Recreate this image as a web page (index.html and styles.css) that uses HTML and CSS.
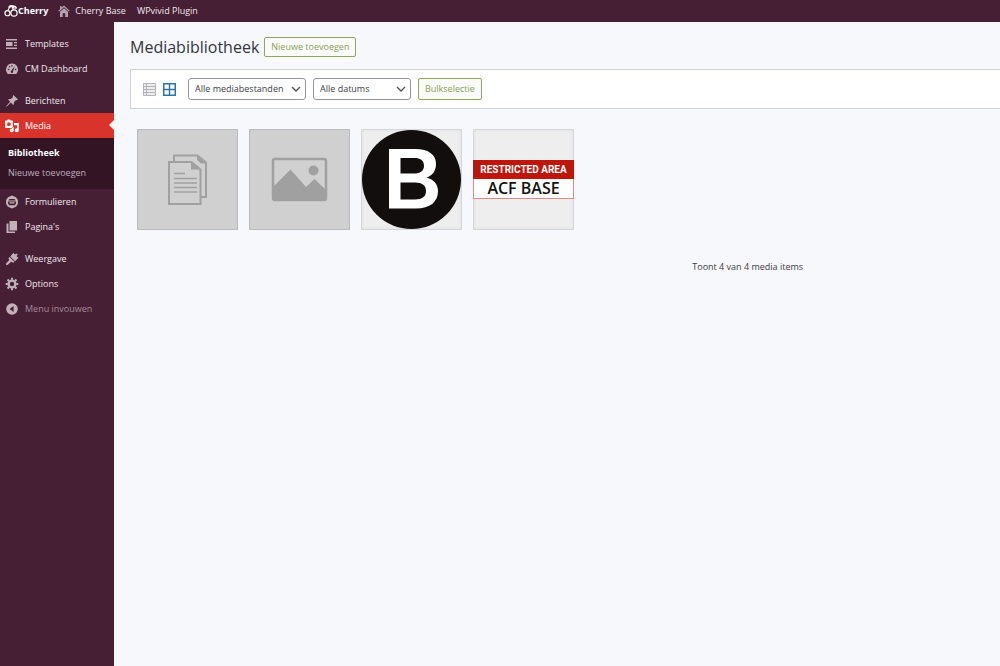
FILE: index.html
```html
<!DOCTYPE html>
<html lang="nl">
<head>
<meta charset="utf-8">
<meta name="viewport" content="width=device-width, initial-scale=1">
<title>Mediabibliotheek</title>
<link rel="stylesheet" href="styles.css">
</head>
<body>
<header class="adminbar">
  <a class="brand" href="#">
    <svg class="brand-mark" viewBox="0 0 15 14" fill="none" stroke="currentColor" stroke-width="1.300" aria-hidden="true"><circle cx="3.700" cy="9.400" r="2.700"/><circle cx="10.700" cy="9.200" r="3.400"/><path d="M4.200 6.700C4.700 4.400 6.500 2.400 9 1.600M10.200 5.800C9 4.600 8.600 3.200 9 1.600M4.800 3.200C6 1.300 7.500 1 9 1.600c2-.3 3.700.4 4.300 2.200-1.800.6-3.500 0-4.300-2.200"/></svg>
    <span>Cherry</span>
  </a>
  <a class="bar-link" href="#">
    <svg class="home" viewBox="0 0 12 12" fill="currentColor" aria-hidden="true"><path d="M6 .5 11.700 5.800 10.900 6.600 6 2.200 1.100 6.600.3 5.800 2 4.200V1.200h1.800v1.300zM6 3.200l4 3.600V12H7.300V8.200H4.700V12H2V6.800z"/></svg>
    <span>Cherry Base</span>
  </a>
  <a class="bar-link" href="#">WPvivid Plugin</a>
</header>
<div class="shell">
  <nav class="sidebar">
    <a class="item" href="#"><svg viewBox="0 0 14 14" aria-hidden="true"><path fill="currentColor" d="M1 2h11v1.400H1zM1 5h6.500v4H1zM9 5h3v1.300H9zM9 7.700h3V9H9zM1 10.600h11V12H1z"/></svg>Templates</a>
    <a class="item" href="#"><svg viewBox="0 0 14 14" aria-hidden="true"><path fill="currentColor" d="M7 1.500a6 6 0 0 0-5.200 9c.4.800.8 1.500 1.400 1.500h7.600c.6 0 1-.7 1.400-1.500A6 6 0 0 0 7 1.500z"/><g fill="#461f34"><circle cx="3.500" cy="7.500" r=".8"/><circle cx="4.600" cy="4.800" r=".8"/><circle cx="7" cy="3.700" r=".8"/><circle cx="10.600" cy="7.500" r=".8"/><path d="M9.800 4 8 9.500a1.200 1.200 0 1 1-1.700-.7z"/></g></svg>CM Dashboard</a>
    <a class="item group" href="#"><svg viewBox="0 0 14 14" aria-hidden="true"><path fill="currentColor" d="m8.400 1 4.600 4.500-.9.700-1-.2-2.200 2.200c.2 1.100.1 2-.7 2.700L5.900 8.600 1.500 12.700l-.4-.4 4-4.500L3 5.600c.8-.7 1.700-.8 2.800-.6L8 2.900l-.2-1z"/></svg>Berichten</a>
    <a class="item current" href="#"><svg viewBox="0 0 14 14" aria-hidden="true"><path fill="currentColor" fill-rule="evenodd" d="M.5 1.500h1.600l.7-1h2l.7 1h1.700q.6 0 .6.600v6.200q0 .6-.6.600H.5q-.5 0-.5-.6V2.100q0-.6.500-.6zM3.900 3.300a1.900 1.900 0 1 0 0 3.800 1.900 1.900 0 0 0 0-3.800zM9 4h4.800v7.300a2 2 0 1 1-1.800-2V6.300H9zM5.500 9.700H7V8.200h1.700v3.500a2 2 0 1 1-3.200-2z"/></svg>Media</a>
    <div class="submenu">
      <a class="sub active" href="#">Bibliotheek</a>
      <a class="sub" href="#">Nieuwe toevoegen</a>
    </div>
    <a class="item" href="#"><svg viewBox="0 0 14 14" aria-hidden="true"><path fill="currentColor" fill-rule="evenodd" d="M7 .6 11 2.200 12.900 5v4L11 11.800 7 13.400 3 11.800 1.100 9V5L3 2.200zM4.500 4 3.400 5.500h7.200L9.500 4zM3 6.600v2l1.200 1.700h5.600L11 8.600v-2zM4.500 7.300h5v1.200h-5z"/></svg>Formulieren</a>
    <a class="item" href="#"><svg viewBox="0 0 14 14" aria-hidden="true"><path fill="currentColor" d="M4.500 1H12v9.500H4.500zM1.500 3.500h2v8H10V13H1.500z"/></svg>Pagina's</a>
    <a class="item group" href="#"><svg viewBox="0 0 14 14" aria-hidden="true"><path fill="currentColor" d="m8.500.8 1.300 1.600 2-1 .9.900-1.200 1.900 1.900 1.500-3.200 3.500-5-4.800zM4.600 5 9.500 9.700 8.300 10.800 6.200 9.700l-3.700 3.200q-1.700.5-1.600-1.200L4.300 8l-.9-1.800z"/></svg>Weergave</a>
    <a class="item" href="#"><svg viewBox="0 0 14 14" aria-hidden="true"><g stroke="currentColor" fill="none"><circle cx="7" cy="7" r="3.400" stroke-width="2.400"/><path stroke-width="2" d="M7 .7v2M7 11.300v2M.7 7h2M11.300 7h2M2.500 2.500 4 4M10 10l1.500 1.500M2.500 11.500 4 10M10 4l1.500-1.500"/></g></svg>Options</a>
    <button class="item collapse" type="button"><svg viewBox="0 0 14 14" aria-hidden="true"><path fill="currentColor" fill-rule="evenodd" d="M7 1.200a5.800 5.800 0 1 0 0 11.600A5.800 5.800 0 0 0 7 1.200zM8.600 4v6L4.600 7z"/></svg>Menu invouwen</button>
  </nav>
  <main class="content">
    <div class="heading">
      <h1>Mediabibliotheek</h1>
      <a class="btn btn-title" href="#">Nieuwe toevoegen</a>
    </div>
    <div class="toolbar">
      <div class="views">
        <button class="view" type="button" aria-label="Lijst"><svg viewBox="0 0 13 13" fill="none" stroke="#b4b5b8" aria-hidden="true"><path fill="#ececee" d="M.5.500h12v12H.5z"/><path d="M3.500.500v12M.5 3.500h12M.5 6.500h12M.5 9.500h12"/></svg></button>
        <button class="view" type="button" aria-label="Raster"><svg viewBox="0 0 13 13" aria-hidden="true"><path fill="#2a75ad" fill-rule="evenodd" d="M0 0h13v13H0zM1.500 1.500v4.300h4.300V1.500zM7.200 1.500v4.300h4.300V1.500zM1.500 7.200v4.300h4.300V7.200zM7.200 7.200v4.300h4.300V7.200z"/></svg></button>
      </div>
      <div class="select type">
        <select aria-label="Filter op type"><option>Alle mediabestanden</option></select>
        <svg viewBox="0 0 10 6" fill="none" stroke="#50555a" stroke-width="1.400" aria-hidden="true"><path d="m1 1 4 4 4-4"/></svg>
      </div>
      <div class="select date">
        <select aria-label="Filter op datum"><option>Alle datums</option></select>
        <svg viewBox="0 0 10 6" fill="none" stroke="#50555a" stroke-width="1.400" aria-hidden="true"><path d="m1 1 4 4 4-4"/></svg>
      </div>
      <button class="btn btn-bulk" type="button">Bulkselectie</button>
    </div>
    <ul class="grid">
      <li class="tile blank"><svg viewBox="0 0 101 101" role="img" aria-label="Document"><g fill="none" stroke="#a0a0a0" stroke-width="2"><path d="M37 32v-5.500h23.500l8.500 7V68h-5"/><path d="M32 33h22.500l9 7.500V75H32z"/><path stroke-width="1.500" d="M37 44.500h11M37 49.500h23M37 54h23M37 58.500h23M37 63h23"/></g><path fill="#a0a0a0" d="M54 33l9.500 7.500H54zM60 26.500l9 8h-5l-4-3.500z"/></svg></li>
      <li class="tile blank"><svg viewBox="0 0 101 101" role="img" aria-label="Afbeelding"><rect x="24" y="30" width="53" height="41" rx="2" fill="none" stroke="#a0a0a0" stroke-width="2.500"/><circle cx="64.500" cy="41.500" r="5" fill="#a0a0a0"/><path fill="#a0a0a0" d="M24 58l17.500-17.500L57 58l8.500-8L77 61v10H24z"/></svg></li>
      <li class="tile"><svg viewBox="0 0 101 101" role="img" aria-label="B"><circle cx="50.500" cy="50.500" r="49.500" fill="#110e0d"/><path fill="#fff" fill-rule="evenodd" d="M28 20h26c14 0 21 6 21 15 0 7-3.500 11.500-9.500 13.500C73 50.500 77 55.500 77 62c0 11-8 17.500-22 17.500H28zM39.500 29v15.500H53c6.500 0 10-2.700 10-7.800S59.500 29 53 29zM39.500 53.500v17H54c7.300 0 11-2.900 11-8.500s-3.700-8.500-11-8.500z"/></svg></li>
      <li class="tile sign"><span class="sign-top">RESTRICTED AREA</span><span class="sign-name">ACF BASE</span></li>
    </ul>
    <p class="count">Toont 4 van 4 media items</p>
  </main>
</div>
</body>
</html>
```
FILE: styles.css
```css
* { box-sizing: border-box; }
body {
  margin: 0;
  min-height: 100vh;
  display: flex;
  flex-direction: column;
  background: #f6f8fc;
  color: #3c4046;
  font: 9px/16px "Open Sans", "Noto Sans", sans-serif;
}
a { color: inherit; text-decoration: none; }
svg { display: block; flex: none; }
button, select { font: inherit; color: inherit; }

.adminbar {
  display: flex;
  align-items: center;
  height: 22px;
  padding-left: 4px;
  background: #461f34;
  color: #f1e9ed;
}
.brand {
  display: flex;
  align-items: center;
  margin-right: 10px;
  color: #fff;
  font-size: 9px;
  font-weight: 700;
}
.brand-mark { width: 14px; height: 14px; }
.bar-link { display: flex; align-items: center; gap: 5px; margin-right: 11px; }
.home { width: 12px; height: 12px; color: #b5a2ac; }

.shell { flex: 1; display: flex; }
.sidebar {
  flex: none;
  width: 114px;
  padding-top: 9px;
  background: #461f34;
  color: #f1e9ed;
}
.item {
  display: flex;
  align-items: center;
  gap: 6px;
  width: 100%;
  height: 25px;
  padding: 0 0 0 5px;
  border: 0;
  background: none;
}
.item svg { width: 14px; height: 14px; color: #c1b2ba; }
.group { margin-top: 7px; }
.current {
  position: relative;
  background: #d9342b;
  color: #fff;
}
.item.current svg { color: #fff; }
.current::after {
  content: "";
  position: absolute;
  right: 0;
  top: 7px;
  border: 5px solid transparent;
  border-left: 0;
  border-right-color: #f6f8fc;
}
.submenu { padding: 5px 0 6px 8px; background: #331425; }
.sub { display: block; line-height: 20px; color: #bfb0b8; }
.active { color: #fff; font-weight: 700; }
.collapse { color: #a38e99; }

.content { flex: 1; min-width: 0; padding: 14px 0 0 16px; }
.heading { display: flex; align-items: center; gap: 5px; height: 22px; }
h1 { margin: 0; font-size: 16px; line-height: 22px; font-weight: 400; color: #32363b; }
.btn {
  display: flex;
  align-items: center;
  justify-content: center;
  border: 1px solid #8fa55c;
  border-radius: 2px;
  background: #fafbf8;
  color: #8a9f58;
}
.btn-title { height: 20px; padding: 0 6px; }
.btn-bulk { height: 22px; padding: 0 6px; }

.toolbar {
  display: flex;
  align-items: center;
  gap: 7px;
  margin-top: 11px;
  padding: 8px 12px;
  border: 1px solid #cfd1d5;
  border-right: 0;
  background: #fff;
}
.views { display: flex; gap: 7px; margin-right: 5px; }
.view { padding: 0; border: 0; background: none; }
.view svg { width: 13px; height: 13px; }
.select { display: grid; align-items: center; }
.select > * { grid-area: 1 / 1; }
.select select {
  width: 100%;
  height: 22px;
  padding: 0 6px;
  appearance: none;
  border: 1px solid #92969b;
  border-radius: 3px;
  background: #fff;
}
.select svg { justify-self: end; width: 10px; height: 6px; margin-right: 5px; pointer-events: none; }
.type { width: 118px; }
.date { width: 98px; }

.grid {
  display: flex;
  flex-wrap: wrap;
  gap: 11px;
  margin: 20px 0 0;
  padding: 0 7px;
  list-style: none;
}
.tile {
  display: flex;
  flex-direction: column;
  justify-content: center;
  width: 101px;
  height: 101px;
  background: #eeeeef;
  box-shadow: inset 0 0 0 1px #d5d6d9, inset 0 0 4px #d5d6d9;
}
.blank { background: #d0d0d0; box-shadow: inset 0 0 0 1px #b9babd; }
.sign-top, .sign-name { text-align: center; white-space: nowrap; }
.sign-top {
  background: #bd160b;
  color: #fff;
  font: 700 10px/19px Roboto, sans-serif;
}
.sign-name {
  border: 1px solid #e08a85;
  border-top: 0;
  background: #fff;
  color: #111;
  font-size: 16px;
  font-weight: 600;
  line-height: 19px;
}
.count { margin: 29px 0 0 42%; text-align: center; }
```
